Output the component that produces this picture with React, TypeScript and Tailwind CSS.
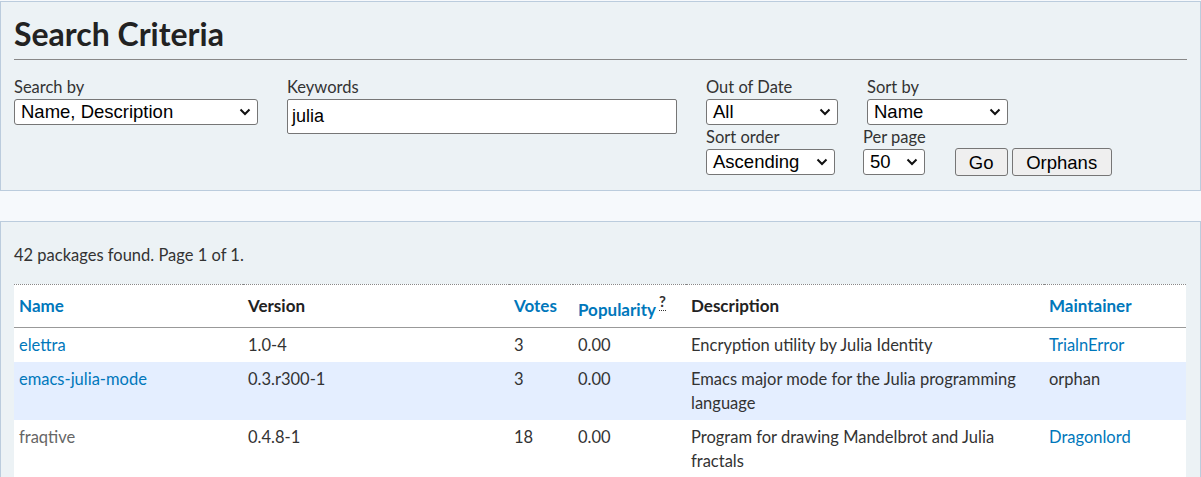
import React from "react";

const Chevron = () => (
  <svg width="12" height="8" viewBox="0 0 12 8" className="shrink-0">
    <path d="M1.5 1.5 L6 6 L10.5 1.5" fill="none" stroke="#111" strokeWidth="2" />
  </svg>
);

const Select = ({ value, w }: { value: string; w: string }) => (
  <div
    className={`${w} h-[26px] flex items-center justify-between pl-[6px] pr-[6px] bg-white border border-[#767676] rounded-[3px] text-[18.5px] text-black font-['Liberation_Sans',Arial,sans-serif]`}
  >
    <span>{value}</span>
    <Chevron />
  </div>
);

const Field = ({ label, children }: { label: string; children: React.ReactNode }) => (
  <div className="flex flex-col">
    <label className="leading-[24px] text-[16.5px]">{label}</label>
    {children}
  </div>
);

const rows = [
  { name: "elettra", visited: false, version: "1.0-4", votes: "3", pop: "0.00", desc: "Encryption utility by Julia Identity", maint: "TrialnError", orphan: false },
  { name: "emacs-julia-mode", visited: false, version: "0.3.r300-1", votes: "3", pop: "0.00", desc: "Emacs major mode for the Julia programming language", maint: "orphan", orphan: true },
  { name: "fraqtive", visited: true, version: "0.4.8-1", votes: "18", pop: "0.00", desc: "Program for drawing Mandelbrot and Julia fractals", maint: "Dragonlord", orphan: false },
];

export default function App() {
  return (
    <div className="min-h-screen bg-[#f6f9fc] pt-px text-[#333] font-['Lato','Open_Sans',sans-serif]">
      <section className="bg-[#ecf2f5] border border-[#bcd] px-[13px] pt-[14px] h-[190px]">
        <h2 className="text-[32px] font-bold leading-[36px] text-[#222] pb-[7px] border-b border-[#888]">
          Search Criteria
        </h2>
        <div className="flex mt-[15px]">
          <Field label="Search by">
            <Select value="Name, Description" w="w-[244px]" />
          </Field>
          <div className="ml-[29px]">
            <Field label="Keywords">
              <div className="w-[390px] h-[35px] bg-white border border-[#767676] rounded-[2px] flex items-center pl-[4px] text-[18px] text-black font-['Liberation_Sans',Arial,sans-serif]">
                julia
              </div>
            </Field>
          </div>
          <div className="ml-[29px] flex flex-col">
            <div className="flex">
              <Field label="Out of Date">
                <Select value="All" w="w-[132px]" />
              </Field>
              <div className="ml-[28px] pl-[1px]">
                <Field label="Sort by">
                  <Select value="Name" w="w-[141px]" />
                </Field>
              </div>
            </div>
            <div className="flex">
              <Field label="Sort order">
                <Select value="Ascending" w="w-[129px]" />
              </Field>
              <div className="ml-[28px]">
                <Field label="Per page">
                  <Select value="50" w="w-[62px]" />
                </Field>
              </div>
              <div className="ml-[29px] flex items-end gap-[4px] -mb-[1px]">
                <button className="w-[53px] h-[28px] bg-[#efefef] border border-[#767676] rounded-[3px] text-[18.5px] text-black font-['Liberation_Sans',Arial,sans-serif]">
                  Go
                </button>
                <button className="w-[100px] h-[28px] bg-[#efefef] border border-[#767676] rounded-[3px] text-[18.5px] text-black font-['Liberation_Sans',Arial,sans-serif]">
                  Orphans
                </button>
              </div>
            </div>
          </div>
        </div>
      </section>

      <section className="mt-[30px] bg-[#ecf2f5] border border-[#bcd] px-[13px] pt-[21px] pb-[20px]">
        <p className="text-[16.5px] leading-[24px]">42 packages found. Page 1 of 1.</p>
        <table className="mt-[17px] w-[1172px] table-fixed border-collapse bg-white text-[16.5px] border-t border-dotted border-[#888]">
          <colgroup>
            <col className="w-[229px]" />
            <col className="w-[266px]" />
            <col className="w-[64px]" />
            <col className="w-[113px]" />
            <col className="w-[358px]" />
            <col className="w-[142px]" />
          </colgroup>
          <thead>
            <tr className="border-b border-[#999] text-left leading-[24px] text-[17px]">
              <th className="px-[5px] py-[9px] font-bold text-[#07b]">Name</th>
              <th className="px-[5px] py-[9px] font-bold text-[#222]">Version</th>
              <th className="px-[5px] py-[9px] font-bold text-[#07b]">Votes</th>
              <th className="px-[5px] pt-[13px] pb-[5px] font-bold text-[#07b]">
                Popularity
                <span className="relative -top-[9px] ml-[3px] text-[15px] text-[#333] font-bold border-b border-dotted border-[#333]">?</span>
              </th>
              <th className="px-[5px] py-[9px] font-bold text-[#222]">Description</th>
              <th className="px-[5px] py-[9px] font-bold text-[#07b]">Maintainer</th>
            </tr>
          </thead>
          <tbody className="leading-[24px]">
            {rows.map((r, i) => (
              <tr key={r.name} className={i % 2 === 1 ? "bg-[#e4eeff]" : "bg-white"}>
                <td className={`px-[5px] py-[5px] align-top ${r.visited ? "text-[#666]" : "text-[#07b]"}`}>{r.name}</td>
                <td className="px-[5px] py-[5px] align-top">{r.version}</td>
                <td className="px-[5px] py-[5px] align-top">{r.votes}</td>
                <td className="px-[5px] py-[5px] align-top">{r.pop}</td>
                <td className="px-[5px] py-[5px] align-top">{r.desc}</td>
                <td className={`px-[5px] py-[5px] align-top ${r.orphan ? "text-[#333]" : "text-[#07b]"}`}>{r.maint}</td>
              </tr>
            ))}
          </tbody>
        </table>
      </section>
    </div>
  );
}
